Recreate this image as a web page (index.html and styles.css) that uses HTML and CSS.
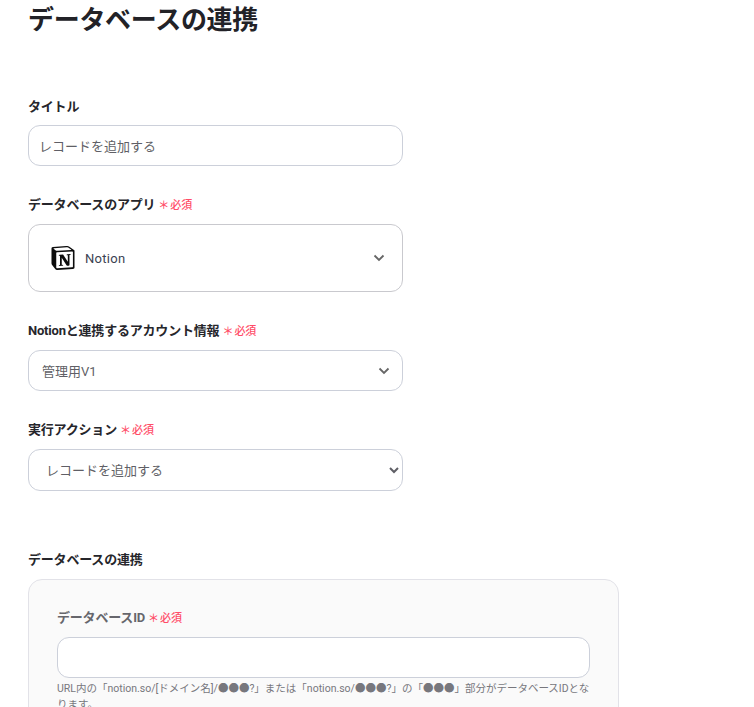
FILE: index.html
```html
<!DOCTYPE html>
<html lang="ja">
<head>
<meta charset="utf-8">
<title>データベースの連携</title>
<link rel="stylesheet" href="styles.css">
</head>
<body>
<main class="page">
  <h1 class="title">データベースの連携</h1>
  <div class="field field-title">
    <label class="label">タイトル</label>
    <input class="control" type="text" value="レコードを追加する">
  </div>
  <div class="field field-app">
    <label class="label">データベースのアプリ<span class="req"><span class="star">＊</span>必須</span></label>
    <div class="control app-select">
      <svg class="notion" viewBox="0 0 24 24" aria-hidden="true"><path d="M4.459 4.208c.746.606 1.026.56 2.428.466l13.215-.793c.28 0 .047-.28-.046-.326L17.86 1.968c-.42-.326-.981-.7-2.055-.607L3.01 2.295c-.466.046-.56.28-.374.466zm.793 3.08v13.904c0 .747.373 1.027 1.214.98l14.523-.84c.841-.046.935-.56.935-1.167V6.354c0-.606-.233-.933-.748-.887l-15.177.887c-.56.047-.747.327-.747.933zm14.337.745c.093.42 0 .84-.42.888l-.7.14v10.264c-.608.327-1.168.514-1.635.514-.748 0-.935-.234-1.495-.933l-4.577-7.186v6.952L12.21 19s0 .84-1.168.84l-3.222.186c-.093-.186 0-.653.327-.746l.84-.233V9.854L7.822 9.76c-.094-.42.14-1.026.793-1.073l3.456-.233 4.764 7.279v-6.44l-1.215-.139c-.093-.514.28-.887.747-.933zM1.936 1.035l13.31-.98c1.634-.14 2.055-.047 3.082.7l4.249 2.986c.7.513.934.653.934 1.213v16.378c0 1.026-.373 1.634-1.68 1.726l-15.458.934c-.98.047-1.448-.093-1.962-.747l-3.129-4.06c-.56-.747-.793-1.306-.793-1.96V2.667c0-.839.374-1.54 1.447-1.632z"/></svg>
      <span class="app-name">Notion</span>
      <svg class="chev" viewBox="0 0 12 8" aria-hidden="true"><path d="M1.5 1.5 6 6l4.500-4.500"/></svg>
    </div>
  </div>
  <div class="field field-account">
    <label class="label">Notionと連携するアカウント情報<span class="req"><span class="star">＊</span>必須</span></label>
    <div class="control account-select">
      <span>管理用V1</span>
      <svg class="chev" viewBox="0 0 12 8" aria-hidden="true"><path d="M1.5 1.5 6 6l4.500-4.500"/></svg>
    </div>
  </div>
  <div class="field field-action">
    <label class="label">実行アクション<span class="req"><span class="star">＊</span>必須</span></label>
    <select class="control native"><option>レコードを追加する</option></select>
  </div>
  <section class="db">
    <h2 class="label">データベースの連携</h2>
    <div class="panel">
      <label class="label muted">データベースID<span class="req"><span class="star">＊</span>必須</span></label>
      <input class="control" type="text">
      <p class="help">URL内の「notion.so/[ドメイン名]/●●●?」または「notion.so/●●●?」の「●●●」部分がデータベースIDとなります。</p>
    </div>
  </section>
</main>
</body>
</html>
```
FILE: styles.css
```css
* { box-sizing: border-box; }
html, body { margin: 0; height: 707px; overflow: hidden; background: #fff; }
body { font-family: Roboto, "Noto Sans CJK JP", sans-serif; color: #2a2a2f; }
.page { padding: 2px 0 0 28px; width: 619px; }
.title { margin: 0; font-size: 26px; line-height: 36px; font-weight: 700; color: #222227; letter-spacing: -0.3px; }
.field { width: 375px; display: flex; flex-direction: column; }
.field-title { margin-top: 59px; }
.field-app { margin-top: 29px; }
.field-account { margin-top: 29px; }
.field-action { margin-top: 29px; }
.label { display: block; margin: 0; font-size: 13px; line-height: 20px; font-weight: 700; color: #26262b; letter-spacing: -0.2px; }
.field .label { margin-bottom: 8px; }
.req { margin-left: 3px; color: #ff4d68; font-size: 11px; font-weight: 500; letter-spacing: 0; }
.star { font-size: 11px; margin-right: 1px; }
.control { width: 100%; height: 41px; border: 1px solid #ccd0da; border-radius: 12px; background: #fff; font-family: inherit; font-size: 13px; color: #5f5f66; padding: 0 10px; outline: none; display: flex; align-items: center; }
.app-select { height: 68px; padding: 0 17px 0 22px; border-color: #c9c9ce; }
.notion { width: 24px; height: 24px; fill: #0c0c0c; flex: none; }
.app-name { margin-left: 10px; flex: 1; color: #3b4252; letter-spacing: 0.3px; }
.chev { width: 12px; height: 8px; fill: none; stroke: #666; stroke-width: 1.8; flex: none; }
.account-select { padding: 0 12px 0 13px; justify-content: space-between; }
.native { height: 42px; padding: 0 9px 0 13px; color: #5f5f66; }
.db { margin-top: 59px; }
.panel { margin-top: 9px; width: 591px; height: 300px; padding: 28px 28px 0; border: 1px solid #e2e2e8; border-radius: 14px; background: #fafafa; }
.panel .label { margin-bottom: 8px; }
.muted { color: #66666c; }
.help { margin: 3px 0 0; font-size: 10.5px; line-height: 16px; color: #77777d; }
```
